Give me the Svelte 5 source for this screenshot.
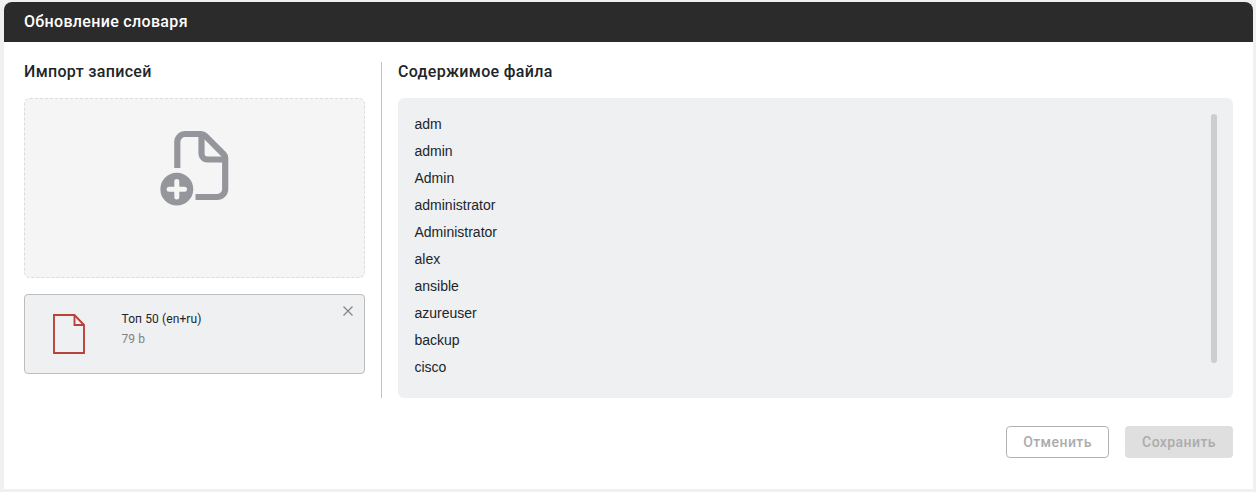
<script>
  const entries = ["adm", "admin", "Admin", "administrator", "Administrator", "alex", "ansible", "azureuser", "backup", "cisco"];
</script>

<div class="card">
  <header>Обновление словаря</header>
  <div class="body">
    <section class="left">
      <h3>Импорт записей</h3>
      <div class="drop">
        <svg width="70" height="80" viewBox="0 0 70 80" fill="none">
          <path d="M17.3 41V15a8 8 0 0 1 8-8H41a6 6 0 0 1 4.3 1.8L63.4 27a6 6 0 0 1 1.8 4.2V62a8 8 0 0 1-8 8H35.5" stroke="#94969c" stroke-width="6.2"/>
          <path d="M41.5 8v18.5a6 6 0 0 0 6 6H64" stroke="#94969c" stroke-width="6.2"/>
          <circle cx="16.8" cy="62.2" r="16.4" fill="#94969c"/>
          <path d="M16.8 54.5v15.4M9.1 62.2h15.4" stroke="#f5f5f6" stroke-width="5" stroke-linecap="round"/>
        </svg>
      </div>
      <div class="file">
        <svg class="doc" width="32" height="40" viewBox="0 0 32 40" fill="none" stroke="#b8433a" stroke-width="1.9">
          <path d="M1 1h20.5L31 11v28H1z"/>
          <path d="M21.5 1v10H31"/>
        </svg>
        <div class="meta">
          <div class="name">Топ 50 (en+ru)</div>
          <div class="size">79 b</div>
        </div>
        <svg class="close" width="10" height="10" viewBox="0 0 10 10" stroke="#85878c" stroke-width="1.3">
          <path d="M.5.5l9 9M9.5.5l-9 9"/>
        </svg>
      </div>
    </section>
    <section class="right">
      <h3>Содержимое файла</h3>
      <div class="content">
        <ul>
          {#each entries as item}
            <li>{item}</li>
          {/each}
        </ul>
        <div class="thumb"></div>
      </div>
    </section>
  </div>
  <footer>
    <button class="cancel" disabled>Отменить</button>
    <button class="save" disabled>Сохранить</button>
  </footer>
</div>

<style>
  :global(body) {
    background: #f0f0f0;
    font-family: Roboto, sans-serif;
  }

  .card {
    margin: 2px 3px 0 4px;
    height: 487px;
    background: #fff;
    border-radius: 8px 8px 0 0;
    display: flex;
    flex-direction: column;
  }

  header {
    height: 40px;
    line-height: 40px;
    padding: 0 20px;
    background: #2b2b2b;
    border-radius: 8px 8px 0 0;
    color: #fff;
    font-size: 16px;
    font-weight: 500;
    letter-spacing: 0.33px;
  }

  .body {
    display: flex;
    padding: 20px 20px 0;
  }

  h3 {
    margin: 0;
    height: 36px;
    line-height: 20px;
    font-size: 16px;
    font-weight: 500;
    letter-spacing: 0.33px;
    color: #212529;
  }

  .left {
    width: 341px;
    height: 336px;
    padding-right: 16px;
    border-right: 1px solid #c4c4c4;
  }

  .drop {
    height: 178px;
    border: 1px dashed #dcdcdc;
    border-radius: 6px;
    background: #f5f5f6;
    display: flex;
    justify-content: center;
  }

  .drop svg {
    margin-top: 28px;
  }

  .file {
    position: relative;
    margin-top: 16px;
    height: 78px;
    border: 1px solid #bdbdbd;
    border-radius: 4px;
    background: #eff0f2;
    display: flex;
  }

  .doc {
    margin: 19px 0 0 28px;
  }

  .meta {
    margin: 17px 0 0 36.5px;
    font-size: 12px;
    line-height: 14px;
    letter-spacing: 0.1px;
  }

  .name {
    color: #212529;
  }

  .size {
    margin-top: 6px;
    color: #7f8285;
  }

  .close {
    position: absolute;
    top: 11px;
    right: 11px;
  }

  .right {
    flex: 1;
    margin-left: 16px;
  }

  .content {
    height: 300px;
    box-sizing: border-box;
    background: #eff0f2;
    border-radius: 6px;
    padding: 13px 16px 0 16.5px;
    display: flex;
    justify-content: space-between;
  }

  ul {
    margin: 0;
    padding: 0;
    list-style: none;
    font-family: "Liberation Sans", Arial, sans-serif;
    font-size: 14px;
    line-height: 27px;
    color: #212529;
  }

  .thumb {
    margin-top: 3px;
    width: 6px;
    height: 249px;
    border-radius: 3px;
    background: #cdcdcd;
  }

  footer {
    display: flex;
    justify-content: flex-end;
    gap: 16px;
    padding: 28px 20px 0;
  }

  button {
    height: 32px;
    border-radius: 4px;
    font-family: Roboto, sans-serif;
    font-size: 14px;
    font-weight: 500;
    letter-spacing: 0.42px;
    color: #acacac;
    padding: 0;
  }

  .cancel {
    width: 103px;
    background: #fff;
    border: 1px solid #b3b3b3;
  }

  .save {
    width: 108px;
    background: #dfdfdf;
    border: 0;
  }
</style>
